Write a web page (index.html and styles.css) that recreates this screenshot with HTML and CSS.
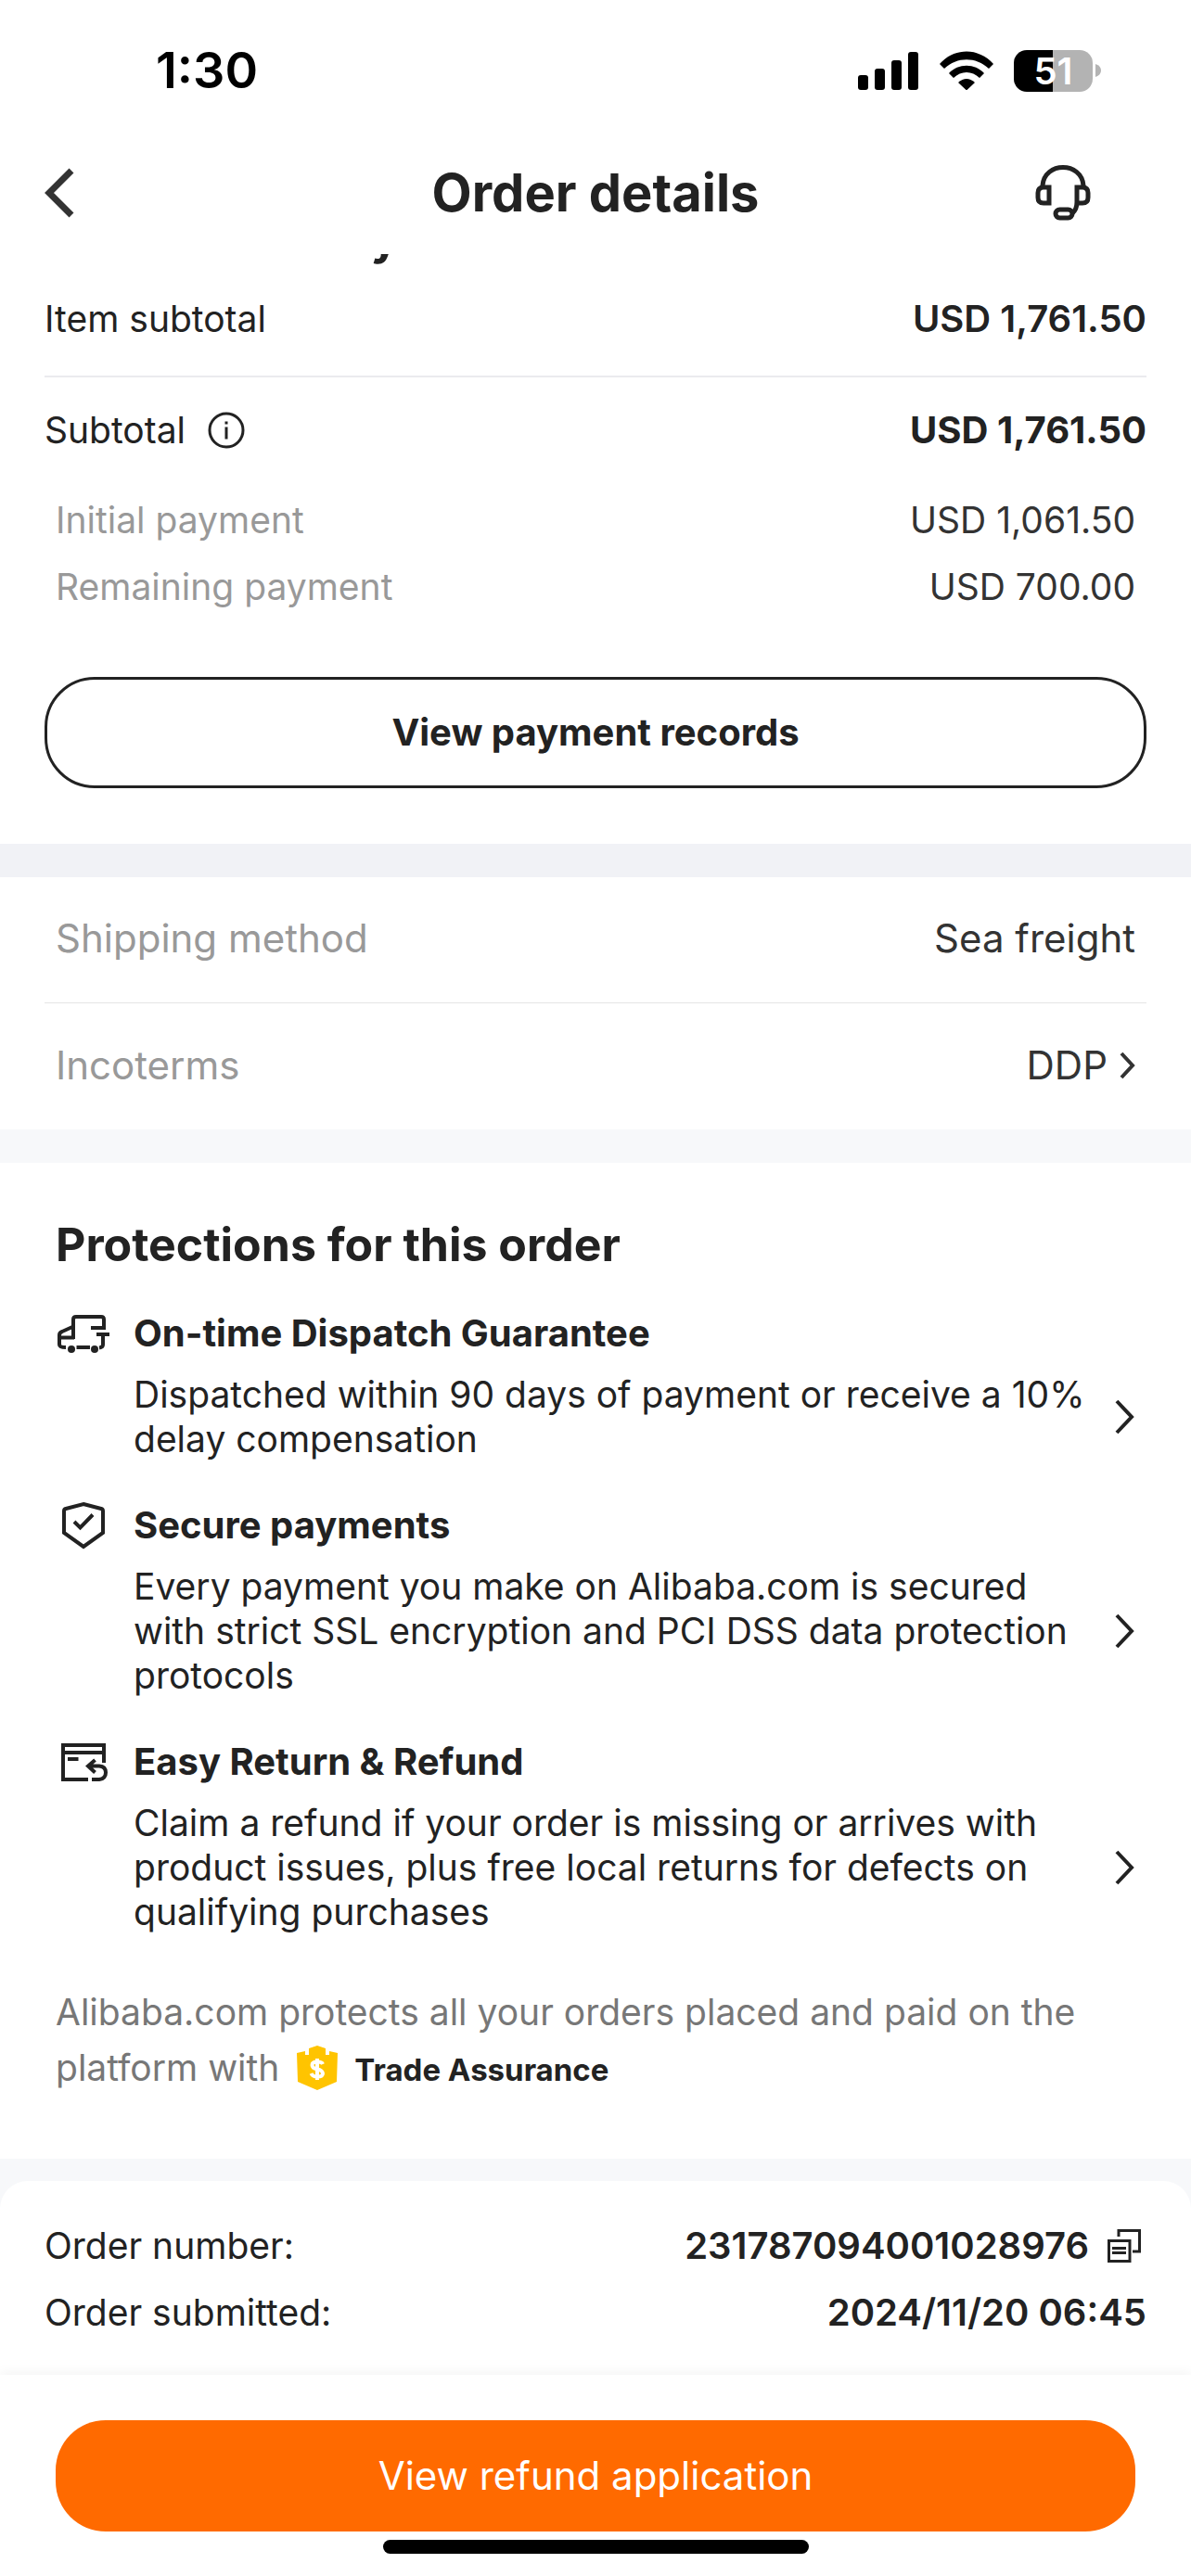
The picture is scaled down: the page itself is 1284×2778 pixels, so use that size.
FILE: index.html
```html
<!DOCTYPE html>
<html lang="en">
<head>
<meta charset="utf-8">
<meta name="viewport" content="width=device-width, initial-scale=1">
<title>Order details</title>
<link rel="stylesheet" href="styles.css">
</head>
<body>
<div class="app">
  <header class="header">
    <div class="status">
      <time class="clock">1:30</time>
      <div class="indicators">
        <svg class="signal" viewBox="0 0 66 42" aria-hidden="true"><rect x="0" y="26" width="11" height="16" rx="3"/><rect x="18" y="19" width="11" height="23" rx="3"/><rect x="36" y="10" width="11" height="32" rx="3"/><rect x="54" y="1" width="11" height="41" rx="3"/></svg>
        <svg class="wifi" viewBox="0 0 58 42" aria-hidden="true"><path d="M0 14C16-4 42-4 58 14L53 19C39 6 19 6 5 19Z"/><path d="M10 24C20 13 38 13 48 24L43 29C35 21 23 21 15 29Z"/><path d="M20 34Q29 26 38 34L29 42.500Z"/></svg>
        <div class="battery"><span class="charge">51</span><svg class="cap" viewBox="0 0 6 14" aria-hidden="true"><path d="M0 0Q6 2 6 7T0 14Z"/></svg></div>
      </div>
    </div>
    <nav class="nav">
      <button class="icon-button" type="button" aria-label="Back"><svg class="back" viewBox="0 0 32 54" aria-hidden="true"><path d="M29 3L5 27L29 51"/></svg></button>
      <h1 class="title">Order details</h1>
      <button class="icon-button" type="button" aria-label="Customer service"><svg class="headset" viewBox="0 0 60 60" aria-hidden="true"><path d="M8 24V22C10-4 50-4 52 22V24M15 24H9Q3 24 3 30V35Q3 41 9 41H15ZM45 24H51Q57 24 57 30V35Q57 41 51 41H45ZM45 40Q45 48 40 52"/><rect x="22" y="48" width="18" height="9" rx="4.500"/></svg></button>
    </nav>
  </header>

  <main>
    <section class="summary">
      <h2 class="heading scrolled">Order summary</h2>
      <div class="row first"><span>Item subtotal</span><span class="medium">USD 1,761.50</span></div>
      <div class="row subtotal"><span class="with-icon">Subtotal <button class="icon-button" type="button" aria-label="About the subtotal"><svg class="info" viewBox="0 0 40 40" aria-hidden="true"><circle cx="20" cy="20" r="18"/><path d="M20 16.500V29.500M20 10.500V13.500"/></svg></button></span><span class="strong">USD 1,761.50</span></div>
      <div class="payments">
        <div class="row"><span class="muted">Initial payment</span><span>USD 1,061.50</span></div>
        <div class="row"><span class="muted">Remaining payment</span><span>USD 700.00</span></div>
      </div>
      <button class="button outline" type="button">View payment records</button>
    </section>

    <section class="shipping">
      <div class="row"><span class="muted">Shipping method</span><span>Sea freight</span></div>
      <a class="row" href="#incoterms"><span class="muted">Incoterms</span><span class="with-arrow">DDP<svg class="arrow-small" viewBox="0 0 18 30" aria-hidden="true"><path d="M3 2L15 15L3 28"/></svg></span></a>
    </section>

    <section class="protections">
      <h2 class="heading">Protections for this order</h2>
      <div class="item">
        <svg class="icon" viewBox="0 0 60 60" aria-hidden="true"><path d="M19 36V15Q19 12 22 12H49Q52 12 52 15V24H38M44 31H58M51 31V42Q51 45 47 45.500M18 23L7 28Q4 29 4 32V42Q4 45 11 45M4 34.500H20M22.500 45H37"/><circle class="dot" cx="17" cy="47" r="4"/><circle class="dot" cx="42" cy="47" r="4"/></svg>
        <h3 class="item-title">On-time Dispatch Guarantee</h3>
        <a class="item-link" href="#dispatch"><span>Dispatched within 90 days of payment or receive a 10% delay compensation</span><svg class="arrow" viewBox="0 0 24 40" aria-hidden="true"><path d="M4 3L20 20L4 37"/></svg></a>
      </div>
      <div class="item">
        <svg class="icon" viewBox="0 0 60 60" aria-hidden="true"><path d="M30 7L49 12Q51 12.500 51 14.500V38L30 53L9 38V14.500Q9 12.500 11 12ZM20 26L26.500 32.500L40 18.500"/></svg>
        <h3 class="item-title">Secure payments</h3>
        <a class="item-link" href="#secure"><span>Every payment you make on Alibaba.com is secured with strict SSL encryption and PCI DSS data protection protocols</span><svg class="arrow" viewBox="0 0 24 40" aria-hidden="true"><path d="M4 3L20 20L4 37"/></svg></a>
      </div>
      <div class="item">
        <svg class="icon" viewBox="0 0 60 60" aria-hidden="true"><path d="M52 31V12H8V49H35M8 20H52M13 27H24.500M42.500 28L35 34.500L42.500 41.500M35 34.500H47Q54 35 54 41.500T47 49H39"/></svg>
        <h3 class="item-title">Easy Return &amp; Refund</h3>
        <a class="item-link" href="#refund"><span>Claim a refund if your order is missing or arrives with product issues, plus free local returns for defects on qualifying purchases</span><svg class="arrow" viewBox="0 0 24 40" aria-hidden="true"><path d="M4 3L20 20L4 37"/></svg></a>
      </div>
      <p class="assurance"><span>Alibaba.com protects all your orders placed and paid on the platform with</span> <svg class="badge" viewBox="0 0 44 48" aria-hidden="true"><path d="M0 8L9 6V10H13V3L22 0L31 3V10H35V6L44 8L43 39L22 48L1 39Z"/><path class="coin" d="M28 20Q27 17.500 22 17.500Q16.500 17.500 16.500 21Q16.500 24.500 22 25.500T28 30Q28 33.500 22 33.500Q17 33.500 15.500 30M22 14V37"/></svg><strong class="brand">Trade Assurance</strong></p>
    </section>

    <section class="order">
      <div class="order-card">
        <div class="row"><span>Order number:</span><span class="number medium">231787094001028976<button class="icon-button" type="button" aria-label="Copy order number"><svg class="copy" viewBox="0 0 36 36" aria-hidden="true"><path d="M1.500 12.500H24V34.500H1.500ZM12 8V1.500H34.500V24H27M5 20.500H20M5 25.500H20"/></svg></button></span></div>
        <div class="row"><span>Order submitted:</span><span class="medium">2024/11/20 06:45</span></div>
      </div>
    </section>
  </main>

  <footer class="footer">
    <button class="button primary" type="button">View refund application</button>
    <div class="home-bar"></div>
  </footer>
</div>
</body>
</html>
```
FILE: styles.css
```css
* { box-sizing: border-box; }

body {
  margin: 0;
  background: #fff;
  color: #222;
  font-family: Inter, "Liberation Sans", sans-serif;
  font-size: 39px;
  line-height: 54px;
}

h1, h2, h3, p { margin: 0; }
a { color: inherit; text-decoration: none; }
svg { display: block; flex: none; fill: none; stroke: #222; }

button {
  margin: 0;
  border: 0;
  padding: 0;
  background: none;
  color: inherit;
  font: inherit;
}

.app { display: flex; flex-direction: column; min-height: 100vh; }
main { flex: 1; }

/* Header */
.header { position: relative; z-index: 1; background: #fff; }

.status {
  display: flex;
  align-items: center;
  justify-content: space-between;
  height: 144px;
  padding: 8px 97px 0 168px;
}
.clock { color: #000; font-size: 54px; font-weight: 600; }
.indicators { display: flex; align-items: center; gap: 22px; }
.signal { width: 66px; height: 42px; fill: #000; stroke: none; }
.wifi { width: 58px; height: 42px; fill: #000; stroke: none; }
.battery { display: flex; align-items: center; gap: 3px; }
.charge {
  width: 85px;
  height: 45px;
  border-radius: 14px;
  background: linear-gradient(90deg, #000 50%, #b3b3b3 50%);
  color: #fff;
  font-size: 40px;
  font-weight: 600;
  line-height: 45px;
  text-align: center;
}
.cap { width: 6px; height: 14px; fill: #b3b3b3; stroke: none; }

.nav {
  display: grid;
  grid-template-columns: 120px 1fr 120px;
  align-items: center;
  height: 130px;
  padding: 0 48px 2px;
}
.icon-button { display: flex; align-items: center; }
.back { width: 32px; height: 54px; stroke: #333; stroke-width: 7px; }
.headset { width: 60px; height: 60px; stroke-width: 5px; }
.title { font-size: 56px; font-weight: 700; line-height: 60px; text-align: center; }

/* Shared rows */
.row { display: flex; justify-content: space-between; align-items: center; }
.heading { font-size: 50px; font-weight: 700; line-height: 60px; }
.medium { font-size: 40px; font-weight: 600; }
.strong { font-size: 40px; font-weight: 700; }
.muted { color: #999; }

.button {
  display: block;
  width: 100%;
  height: 120px;
  border-radius: 54px;
  text-align: center;
}
.outline { border: 3px solid #222; font-size: 40px; font-weight: 700; }
.primary { background: #ff6a00; color: #fff; font-size: 42px; }

/* Order summary */
.summary { padding: 0 48px 60px; border-bottom: 36px solid #f1f2f6; }
.scrolled { margin-top: -48px; }
.first { padding: 31px 0 34px; border-bottom: 2px solid #ebebee; }
.subtotal { padding: 30px 0 34px; }
.with-icon { display: flex; align-items: center; gap: 24px; }
.info { width: 40px; height: 40px; stroke-width: 3px; }
.payments { padding: 0 12px 61px; color: #333; line-height: 72px; }

/* Shipping */
.shipping { border-bottom: 36px solid #f7f8fa; padding: 0 48px; color: #333; font-size: 42px; }
.shipping .row { padding: 39px 12px 42px; }
.shipping .row + .row { padding-top: 40px; border-top: 1px solid #e5e5e5; }
.with-arrow { display: flex; align-items: center; gap: 12px; }
.arrow-small { width: 18px; height: 30px; stroke: #333; stroke-width: 4px; }

/* Protections */
.protections { padding: 58px 60px 66px; }
.item {
  display: grid;
  grid-template-columns: 60px 1fr;
  column-gap: 24px;
  align-items: center;
  margin-top: 42px;
}
.heading + .item { margin-top: 39px; }
.icon { width: 60px; height: 60px; margin: -3px 0; stroke-width: 4px; }
.dot { fill: #222; stroke: none; }
.item-title { font-size: 40px; font-weight: 700; }
.item-link {
  grid-column: 2;
  display: flex;
  align-items: center;
  justify-content: space-between;
  gap: 20px;
  margin-top: 15px;
  line-height: 48px;
}
.arrow { width: 24px; height: 40px; stroke-width: 4px; }

.assurance { margin-top: 54px; color: #777; line-height: 60px; }
.badge {
  display: inline-block;
  width: 44px;
  height: 48px;
  margin: 0 18px 0 8px;
  vertical-align: -10px;
  fill: #ffc400;
  stroke: none;
}
.coin { fill: none; stroke: #fff; stroke-width: 4px; }
.brand { color: #222; font-size: 33px; font-weight: 700; }

/* Order info */
.order { background: #f7f8fa; padding-top: 24px; }
.order-card {
  padding: 34px 48px 31px;
  border-radius: 30px 30px 0 0;
  background: #fff;
  line-height: 72px;
}
.number { display: flex; align-items: center; gap: 20px; }
.number .icon-button { padding-right: 6px; }
.copy { width: 36px; height: 36px; stroke-width: 3px; }

/* Footer */
.footer {
  position: relative;
  padding: 49px 60px 24px;
  background: #fff;
  box-shadow: 0 -2px 12px rgba(0, 0, 0, 0.05);
}
.home-bar {
  width: 40%;
  max-width: 459px;
  height: 15px;
  margin: 9px auto 0;
  border-radius: 8px;
  background: #000;
}
```
